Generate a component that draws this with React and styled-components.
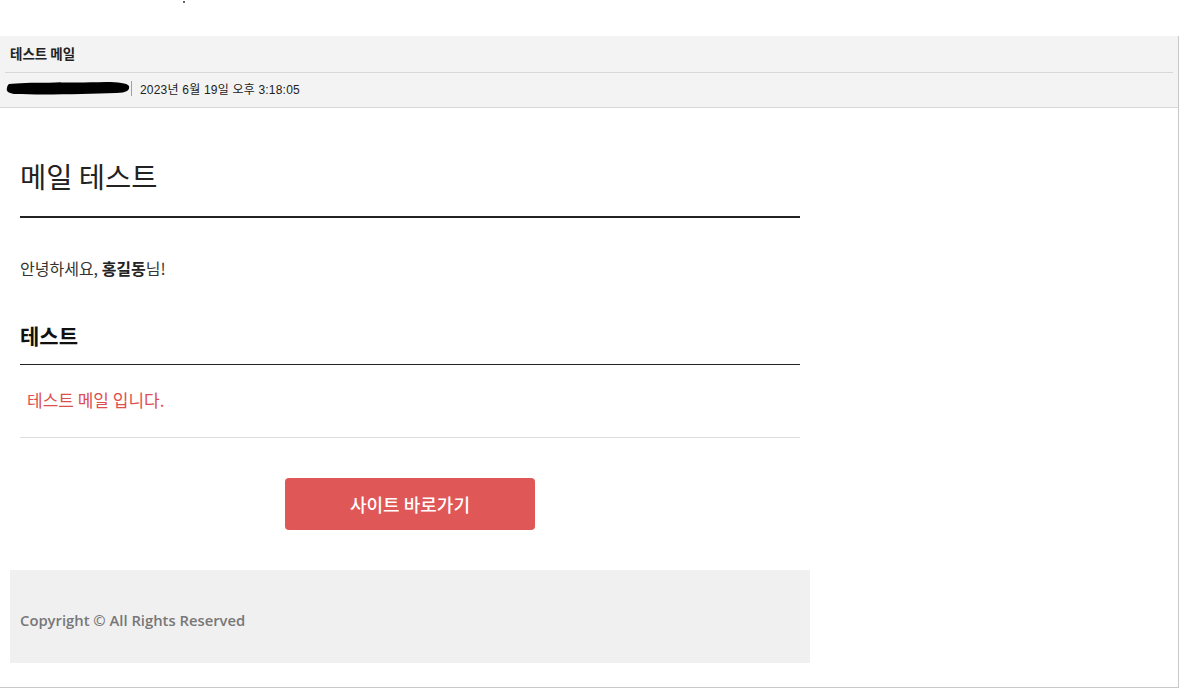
import React from 'react';
import styled, { createGlobalStyle } from 'styled-components';

const GlobalStyle = createGlobalStyle`
  html, body {
    margin: 0;
    padding: 0;
    background: #fff;
  }
  body {
    font-family: "Noto Sans CJK KR", "Noto Sans", sans-serif;
    color: #222;
  }
`

const Page = styled.div`
  width: 1184px;
  height: 688px;
  overflow: hidden;
`

const TopGap = styled.div`
  position: relative;
  height: 36px;
`

const Dot = styled.span`
  position: absolute;
  left: 183px;
  top: 1px;
  width: 2px;
  height: 2px;
  border-radius: 1px;
  background: #333;
`

const Frame = styled.div`
  width: 1178px;
  height: 651px;
  border-right: 1px solid #c8c8c8;
  border-bottom: 1px solid #c8c8c8;
  display: flex;
  flex-direction: column;
`

const Header = styled.div`
  background: #f3f3f3;
  border-bottom: 1px solid #d8d8d8;
`

const HeaderRow = styled.div`
  display: flex;
  align-items: center;
  box-sizing: border-box;
  height: ${props => props.h};
  padding-bottom: ${props => props.lift || '0'};
  margin: 0 5px;
  border-bottom: ${props => props.divider ? '1px solid #d8d8d8' : 'none'};
`

const Subject = styled.div`
  padding-left: 5px;
  font-family: "Noto Sans CJK KR", sans-serif;
  font-size: 13.5px;
  line-height: 18px;
  font-weight: bold;
  color: #222;
`

const Redact = styled.svg`
  display: block;
  margin-left: 1px;
`

const Sep = styled.span`
  width: 1px;
  height: 15px;
  background: #a0a0a0;
  margin: 0 8px 0 1px;
`

const DateText = styled.span`
  font-family: "Liberation Sans", "Noto Sans CJK KR", sans-serif;
  font-size: 12px;
  letter-spacing: 0.2px;
  color: #222;
`

const Content = styled.div`
  flex: 1;
  padding-left: 10px;
`

const Mail = styled.div`
  width: 780px;
  padding: 0 10px;
`

const Title = styled.h1`
  margin: 0;
  padding: 48px 0 21px;
  font-size: 28.5px;
  line-height: 39px;
  font-weight: 400;
  color: #222;
  border-bottom: 2px solid #222;
`

const Greeting = styled.p`
  margin: 38px 0 0;
  font-size: 16px;
  line-height: 24px;
  color: #333;

  b {
    color: #222;
    font-weight: bold;
  }
`

const Section = styled.h2`
  margin: 40px 0 0;
  padding-bottom: 14px;
  font-size: 21px;
  line-height: 30px;
  font-weight: bold;
  color: #111;
  border-bottom: 1px solid #222;
`

const Notice = styled.p`
  margin: 0;
  padding: 23px 7px 25px;
  font-size: 17px;
  line-height: 24px;
  color: #dd4f4f;
  border-bottom: 1px solid #dedede;
`

const ButtonRow = styled.div`
  display: flex;
  justify-content: center;
  padding: 40px 0;
`

const LinkButton = styled.a`
  display: flex;
  align-items: center;
  justify-content: center;
  width: 250px;
  height: 52px;
  border-radius: 4px;
  background: #df5757;
  color: #fff;
  font-size: 18px;
  font-weight: 500;
  text-decoration: none;
`

const Footer = styled.div`
  width: 780px;
  padding: 40px 10px 33px;
  background: #f0f0f0;
  font-family: "Open Sans", "Noto Sans", sans-serif;
  font-size: 14.8px;
  line-height: 20px;
  font-weight: 600;
  color: #777;
`

export default function App() {
  return (
    <Page>
      <GlobalStyle />
      <TopGap>
        <Dot />
      </TopGap>
      <Frame>
        <Header>
          <HeaderRow h="37px" lift="2px" divider>
            <Subject>테스트 메일</Subject>
          </HeaderRow>
          <HeaderRow h="34px" lift="4px">
            <Redact width="124" height="18" viewBox="0 0 124 18">
              <path d="M3 5 C20 3 60 4 100 3 C112 3 121 4 123 7 C124 11 121 14 110 14 C80 15 40 16 8 15 C2 14 0 12 1 9 C1 7 2 6 3 5 Z" fill="#000" />
            </Redact>
            <Sep />
            <DateText>2023년 6월 19일 오후 3:18:05</DateText>
          </HeaderRow>
        </Header>
        <Content>
          <Mail>
            <Title>메일 테스트</Title>
            <Greeting>안녕하세요, <b>홍길동</b>님!</Greeting>
            <Section>테스트</Section>
            <Notice>테스트 메일 입니다.</Notice>
            <ButtonRow>
              <LinkButton href="#">사이트 바로가기</LinkButton>
            </ButtonRow>
          </Mail>
          <Footer>Copyright © All Rights Reserved</Footer>
        </Content>
      </Frame>
    </Page>
  );
}
